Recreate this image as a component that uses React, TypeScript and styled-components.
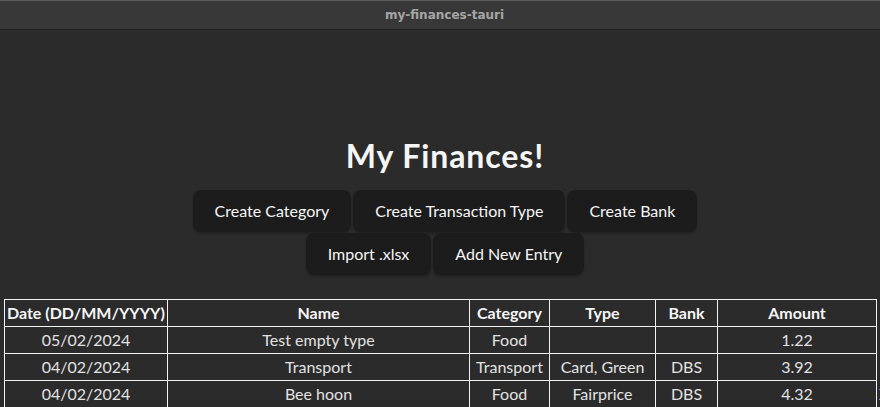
import React from "react";
import styled, { createGlobalStyle } from "styled-components";

const Global = createGlobalStyle`
  html, body { margin: 0; padding: 0; background: #2b2b2b; overflow: hidden; }
  body { font-family: Lato, "Noto Sans", sans-serif; color: #f6f6f6; }
`;

const Window = styled.div`
  width: 880px;
  height: 407px;
  display: flex;
  flex-direction: column;
  background: #2b2b2b;
  overflow: hidden;
`;

const TitleBar = styled.div`
  flex: none;
  display: flex;
  align-items: center;
  justify-content: center;
  padding-left: 9px;
  background: #383838;
  border-top: 1px solid #5a5a5a;
  border-bottom: 1px solid #222;
  box-sizing: border-box;
  height: 30px;
  font-family: "DejaVu Sans", sans-serif;
  font-weight: bold;
  font-size: 12px;
  color: #a6a6a6;
`;

const Container = styled.main`
  display: flex;
  flex-direction: column;
  align-items: center;
  padding: 106px 0 0 10px;
`;

const Heading = styled.h1`
  margin: 0 0 14px;
  font-size: 32px;
  line-height: 40px;
  font-weight: 700;
  letter-spacing: 0.9px;
  color: #f6f6f6;
`;

const ButtonGroup = styled.div`
  display: flex;
  flex-wrap: wrap;
  justify-content: center;
  gap: 1px 2px;
  width: 540px;
`;

const Button = styled.button`
  border: none;
  border-radius: 8px;
  padding: 9px 22px;
  font-family: Lato, "Noto Sans", sans-serif;
  font-size: 16px;
  line-height: 24px;
  font-weight: 400;
  color: #f6f6f6;
  background: #1c1c1c;
  box-shadow: 0 2px 2px rgba(0, 0, 0, 0.2);
`;

const Table = styled.table`
  margin: 24px 4px 0;
  border-collapse: collapse;
  table-layout: fixed;
  width: 892px;
  font-size: 16px;
  line-height: 24px;
`;

const Col = styled.col<{ $w: number }>`
  width: ${(p) => p.$w}px;
`;

const Th = styled.th`
  border: 1px solid #f2f2f2;
  padding: 1px;
  font-weight: 700;
  color: #f6f6f6;
  text-align: center;
  white-space: nowrap;
`;

const Td = styled.td`
  border: 1px solid #f2f2f2;
  padding: 1px;
  color: #e2e2e2;
  text-align: center;
  white-space: nowrap;
`;

const ActionCell = styled.td`
  border: none;
  padding: 1px 2px;
  color: #e2e2e2;
  text-align: left;
`;

const cols = [163, 302, 80, 106, 62, 159, 20];
const headers = ["Date (DD/MM/YYYY)", "Name", "Category", "Type", "Bank", "Amount"];
const rows = [
  { date: "05/02/2024", name: "Test empty type", cat: "Food", type: "", bank: "", amt: "1.22", x: false },
  { date: "04/02/2024", name: "Transport", cat: "Transport", type: "Card, Green", bank: "DBS", amt: "3.92", x: false },
  { date: "04/02/2024", name: "Bee hoon", cat: "Food", type: "Fairprice", bank: "DBS", amt: "4.32", x: true },
];

export default function App() {
  return (
    <Window>
      <Global />
      <TitleBar>my-finances-tauri</TitleBar>
      <Container>
        <Heading>My Finances!</Heading>
        <ButtonGroup>
          <Button>Create Category</Button>
          <Button>Create Transaction Type</Button>
          <Button>Create Bank</Button>
          <Button>Import .xlsx</Button>
          <Button>Add New Entry</Button>
        </ButtonGroup>
      </Container>
      <Table>
        <colgroup>
          {cols.map((w, i) => (
            <Col key={i} $w={w} />
          ))}
        </colgroup>
        <thead>
          <tr>
            {headers.map((h) => (
              <Th key={h}>{h}</Th>
            ))}
            <ActionCell />
          </tr>
        </thead>
        <tbody>
          {rows.map((r, i) => (
            <tr key={i}>
              <Td>{r.date}</Td>
              <Td>{r.name}</Td>
              <Td>{r.cat}</Td>
              <Td>{r.type}</Td>
              <Td>{r.bank}</Td>
              <Td>{r.amt}</Td>
              <ActionCell>{r.x ? "X" : ""}</ActionCell>
            </tr>
          ))}
        </tbody>
      </Table>
    </Window>
  );
}
